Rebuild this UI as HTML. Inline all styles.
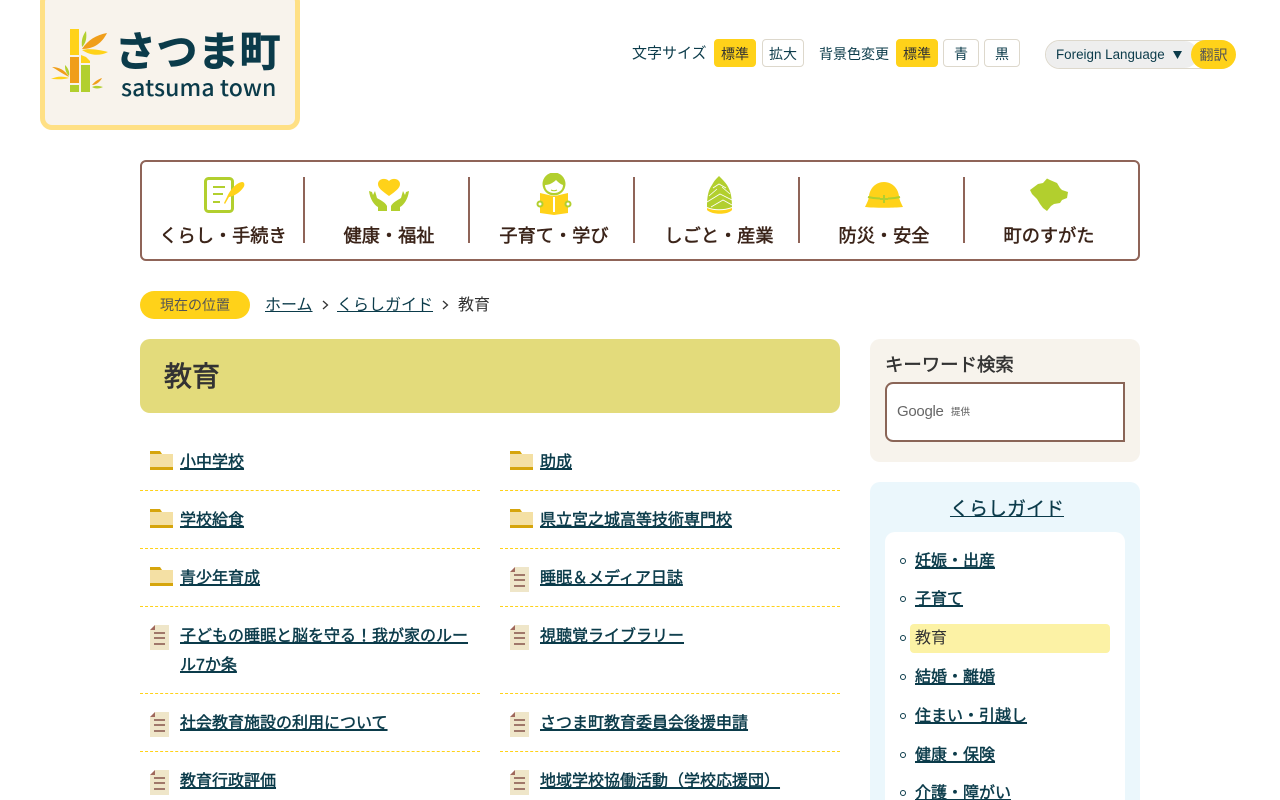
<!DOCTYPE html>
<html lang="ja"><head><meta charset="utf-8"><title>教育 | さつま町</title>
<style>
html,body{margin:0;padding:0;background:#fff;width:1280px;height:800px;overflow:hidden}
#w{position:relative;width:1280px;height:800px;overflow:hidden;font-family:"Liberation Sans","Noto Sans CJK JP",sans-serif;color:#333}
.a{position:absolute;white-space:nowrap}
a{color:#0b3b4a;text-decoration:underline}
.btn{position:absolute;top:39px;height:28px;line-height:28px;box-sizing:border-box;border:1px solid #ddd8cc;border-radius:4px;background:#fff;text-align:center;font-size:14px;color:#0b3b4a}
.on{background:#ffd219;border-color:#ffd219;color:#333}
.nav{position:absolute;top:225px;height:22px;line-height:22px;font-size:18.2px;color:#3a2318;text-align:center;white-space:nowrap;-webkit-text-stroke:.5px #3a2318}
.sep{position:absolute;top:177px;width:2px;height:66px;background:#8f6458}
.li{position:absolute;font-size:16px;line-height:29px;-webkit-text-stroke:.45px #0b3b4a}
.li a,.s a{text-decoration-thickness:1.5px}
.ln{position:absolute;width:340px;height:0;border-top:1px dashed #ffd219}
.s{position:absolute;left:915px;font-size:16px;line-height:22px;white-space:nowrap;-webkit-text-stroke:.45px #0b3b4a}
.dot{position:absolute;left:900px;width:4px;height:4px;border:1px solid #0b3b4a;border-radius:50%}
</style></head><body><div id="w">
<svg width="0" height="0" style="position:absolute"><defs>
<g id="folder"><path d="M0 0H10L12 3H23V19H0Z" fill="#d6a50c"/><rect x="0" y="3" width="23" height="13" fill="#f4e0a4"/></g>
<g id="doc"><path d="M5 0H19V25H0V5Z" fill="#efe6c9"/><path d="M5 0V5H0Z" fill="#a0695c"/><path d="M4 8H15M4 13H15M4 19H15" stroke="#a0786a" stroke-width="2"/></g>
</defs></svg>

<!-- logo -->
<div style="position:absolute;left:40px;top:-10px;width:260px;height:140px;box-sizing:border-box;border:5px solid #ffe085;border-radius:12px;background:#f8f3ec"></div>
<svg class="a" style="left:50px;top:26px" width="60" height="70" viewBox="0 0 60 70">
<rect x="20" y="3" width="9" height="26" fill="#ffd219"/><rect x="20" y="31" width="9" height="26" fill="#f09e1a"/><rect x="20" y="59" width="9" height="7" fill="#b2cf2e"/>
<path d="M31 29L36 31L40 35V37H31Z" fill="#ffd219"/><rect x="31" y="39" width="9" height="27" fill="#b2cf2e"/>
<path d="M32 21C31 14 33 9 36 5C37 12 36 17 32 21Z" fill="#b2cf2e"/><path d="M32 23C38 14 46 9 57 7C52 17 44 23 32 23Z" fill="#f09e1a"/><path d="M32 24C40 22 49 24 58 26C50 30 41 30 32 24Z" fill="#ffd219"/>
<path d="M19 51C11 47 6 43 2 41C9 41 15 44 19 51Z" fill="#f09e1a"/><path d="M19 52C12 54 6 53 1 53C7 50 13 50 19 52Z" fill="#ffd219"/><path d="M19 50C15 46 15 42 15 39C18 42 20 46 19 50Z" fill="#b2cf2e"/>
<path d="M42 59C45 55 49 53 52 52C50 56 46 59 42 59Z" fill="#f09e1a"/><path d="M42 61C46 59 50 60 53 61C49 63 45 63 42 61Z" fill="#b2cf2e"/>
</svg>
<div class="a" style="left:115px;top:27px;font-size:41px;line-height:50px;font-weight:700;color:#0b3b4a;letter-spacing:.5px;-webkit-text-stroke:.7px #0b3b4a">さつま町</div>
<div class="a" style="left:121px;top:71px;font-size:23px;line-height:30px;font-weight:500;color:#0b3b4a;letter-spacing:.1px;font-family:'Noto Sans CJK JP',sans-serif">satsuma town</div>

<!-- tools -->
<div class="a" style="left:632px;top:44px;font-size:15px;line-height:20px;color:#0b3b4a">文字サイズ</div>
<div class="btn on" style="left:714px;width:42px">標準</div>
<div class="btn" style="left:762px;width:42px">拡大</div>
<div class="a" style="left:819px;top:44px;font-size:14px;line-height:20px;color:#0b3b4a">背景色変更</div>
<div class="btn on" style="left:896px;width:42px">標準</div>
<div class="btn" style="left:943px;width:36px">青</div>
<div class="btn" style="left:984px;width:36px">黒</div>
<div style="position:absolute;left:1045px;top:40px;width:190px;height:29px;box-sizing:border-box;border:1px solid #ddd8cc;border-radius:15px;background:#fff"></div>
<div style="position:absolute;left:1046px;top:41px;width:152px;height:27px;border-radius:14px;background:#eee"></div>
<div class="a" style="left:1056px;top:45px;font-size:13.400px;line-height:19px;color:#0b3b4a">Foreign Language</div>
<svg class="a" style="left:1173px;top:51px" width="9" height="8"><path d="M0 0H9L4.500 8Z" fill="#0b3b4a"/></svg>
<div class="a" style="left:1191px;top:40px;width:45px;height:29px;border-radius:15px;background:#ffd219;text-align:center;font-size:14px;line-height:31px;color:#555">翻訳</div>

<!-- nav -->
<div style="position:absolute;left:140px;top:160px;width:1000px;height:101px;box-sizing:border-box;border:2px solid #8f6458;border-radius:6px"></div>
<div class="sep" style="left:303px"></div><div class="sep" style="left:468px"></div><div class="sep" style="left:633px"></div><div class="sep" style="left:798px"></div><div class="sep" style="left:963px"></div>

<svg class="a" style="left:204px;top:176px" width="42" height="38"><rect x="1.500" y="2.500" width="27" height="33" rx="3" fill="#fff" stroke="#b2cf2e" stroke-width="3"/><path d="M9 11H21M9 18H19M9 26H16" stroke="#b2cf2e" stroke-width="2"/><path d="M20 27L23 21C26 14 32 7 38 6C41 6 41 10 39 12C36 16 31 20 25 21L21 28Z" fill="#ffd219"/></svg>
<svg class="a" style="left:368px;top:178px" width="42" height="36"><path d="M21 18C14 13 10 10 10 6C10 1 17-1 21 3C25-1 32 1 32 6C32 10 28 13 21 18Z" fill="#ffd219"/><path d="M1 13L4 14L5 17L7 13L9 20C12 22 17 24 19 28V33H10V29C6 27 2 21 1 13Z" fill="#b2cf2e"/><path d="M41 13L38 14L37 17L35 13L33 20C30 22 25 24 23 28V33H32V29C36 27 40 21 41 13Z" fill="#b2cf2e"/></svg>
<svg class="a" style="left:535px;top:173px" width="38" height="44"><circle cx="19" cy="11" r="11.500" fill="#b2cf2e"/><path d="M10 12C14 12 18 10 21 7C23 9 25 11 28 12C28 17 24 20 19 20C14 20 10 17 10 12Z" fill="#fff"/><path d="M16 17C18 18 20 18 22 17" stroke="#b2cf2e" fill="none" stroke-width="1"/><path d="M5 20L18 23H20L33 20V40L19 42L5 40Z" fill="#ffd219"/><rect x="18" y="24" width="2" height="15" fill="#fff"/><circle cx="5" cy="31" r="2.500" fill="#fff" stroke="#b2cf2e" stroke-width="2"/><circle cx="33" cy="31" r="2.500" fill="#fff" stroke="#b2cf2e" stroke-width="2"/></svg>
<svg class="a" style="left:704px;top:175px" width="30" height="40"><path d="M15 1C18 4 21 7 23 10C26 15 28 20 28 32C20 35 10 35 3 32C3 20 5 14 8 10C10 6 12 4 15 1Z" fill="#b2cf2e"/><path d="M3 33C10 36 20 36 28 33L28 35C24 40 8 40 3 35Z" fill="#ffd219"/><path d="M3 27L16 19L28 25M7 32L19 25L28 30M9 13L15 9L22 13M5 21L13 14M26 19L18 12" stroke="#fff" fill="none" stroke-width=".8"/></svg>
<svg class="a" style="left:864px;top:181px" width="40" height="28"><path d="M1 26C3 22 5 18 5 15C6 7 12 1 20 1C28 1 34 7 35 15C35 18 37 22 39 26C30 27 10 27 1 26Z" fill="#ffd219"/><path d="M4 16C8 17 12 17.500 16 17.500M24 17.500C28 17.500 32 17 36 16M20 14V22M16 18H24" stroke="#b2cf2e" fill="none" stroke-width="2"/></svg>
<svg class="a" style="left:1029px;top:177px" width="40" height="36"><path d="M1 13L9 7L14 6L18 1.500L21 3L28 6L31 11L33 13L39 15L38 21L33 23L31 26L25 27L22 29L18 34L14 31L11 27L8 22L3 17Z" fill="#b2cf2e"/></svg>

<div class="nav" style="left:143px;width:160px">くらし・手続き</div>
<div class="nav" style="left:309px;width:160px">健康・福祉</div>
<div class="nav" style="left:474px;width:160px">子育て・学び</div>
<div class="nav" style="left:639px;width:160px">しごと・産業</div>
<div class="nav" style="left:804px;width:160px">防災・安全</div>
<div class="nav" style="left:969px;width:160px">町のすがた</div>

<!-- breadcrumb -->
<div class="a" style="left:140px;top:291px;width:110px;height:28px;border-radius:14px;background:#ffd219;text-align:center;font-size:14px;line-height:29px;color:#555">現在の位置</div>
<div class="a" style="left:265px;top:295px;font-size:16px;line-height:22px"><a href="#">ホーム</a></div>
<svg class="a" style="left:322px;top:300px" width="7" height="10"><path d="M1 1L5.500 5L1 9" fill="none" stroke="#333" stroke-width="1.300"/></svg>
<div class="a" style="left:337px;top:295px;font-size:16px;line-height:22px"><a href="#">くらしガイド</a></div>
<svg class="a" style="left:442px;top:300px" width="7" height="10"><path d="M1 1L5.500 5L1 9" fill="none" stroke="#333" stroke-width="1.300"/></svg>
<div class="a" style="left:458px;top:295px;font-size:16px;line-height:22px;color:#333">教育</div>

<!-- title -->
<div style="position:absolute;left:140px;top:339px;width:700px;height:74px;border-radius:10px;background:#e3db7b"></div>
<div class="a" style="left:164px;top:357px;font-size:28px;line-height:40px;color:#333;-webkit-text-stroke:.7px #333">教育</div>

<!-- list left -->
<svg class="a" style="left:150px;top:451px" width="23" height="20"><use href="#folder"/></svg>
<div class="li" style="left:180px;top:448px"><a href="#">小中学校</a></div>
<div class="ln" style="left:140px;top:490px"></div>
<svg class="a" style="left:150px;top:509px" width="23" height="20"><use href="#folder"/></svg>
<div class="li" style="left:180px;top:506px"><a href="#">学校給食</a></div>
<div class="ln" style="left:140px;top:548px"></div>
<svg class="a" style="left:150px;top:567px" width="23" height="20"><use href="#folder"/></svg>
<div class="li" style="left:180px;top:564px"><a href="#">青少年育成</a></div>
<div class="ln" style="left:140px;top:606px"></div>
<svg class="a" style="left:150px;top:625px" width="19" height="25"><use href="#doc"/></svg>
<div class="li" style="left:180px;top:622px;width:290px"><a href="#">子どもの睡眠と脳を守る！我が家のルール7か条</a></div>
<div class="ln" style="left:140px;top:693px"></div>
<svg class="a" style="left:150px;top:712px" width="19" height="25"><use href="#doc"/></svg>
<div class="li" style="left:180px;top:709px"><a href="#">社会教育施設の利用について</a></div>
<div class="ln" style="left:140px;top:751px"></div>
<svg class="a" style="left:150px;top:770px" width="19" height="25"><use href="#doc"/></svg>
<div class="li" style="left:180px;top:767px"><a href="#">教育行政評価</a></div>

<!-- list right -->
<svg class="a" style="left:510px;top:451px" width="23" height="20"><use href="#folder"/></svg>
<div class="li" style="left:540px;top:448px"><a href="#">助成</a></div>
<div class="ln" style="left:500px;top:490px"></div>
<svg class="a" style="left:510px;top:509px" width="23" height="20"><use href="#folder"/></svg>
<div class="li" style="left:540px;top:506px"><a href="#">県立宮之城高等技術専門校</a></div>
<div class="ln" style="left:500px;top:548px"></div>
<svg class="a" style="left:510px;top:567px" width="19" height="25"><use href="#doc"/></svg>
<div class="li" style="left:540px;top:564px"><a href="#">睡眠＆メディア日誌</a></div>
<div class="ln" style="left:500px;top:606px"></div>
<svg class="a" style="left:510px;top:625px" width="19" height="25"><use href="#doc"/></svg>
<div class="li" style="left:540px;top:622px"><a href="#">視聴覚ライブラリー</a></div>
<div class="ln" style="left:500px;top:693px"></div>
<svg class="a" style="left:510px;top:712px" width="19" height="25"><use href="#doc"/></svg>
<div class="li" style="left:540px;top:709px"><a href="#">さつま町教育委員会後援申請</a></div>
<div class="ln" style="left:500px;top:751px"></div>
<svg class="a" style="left:510px;top:770px" width="19" height="25"><use href="#doc"/></svg>
<div class="li" style="left:540px;top:767px"><a href="#">地域学校協働活動（学校応援団）</a></div>

<!-- sidebar search -->
<div style="position:absolute;left:870px;top:339px;width:270px;height:123px;border-radius:10px;background:#f7f3ec"></div>
<div class="a" style="left:885px;top:352px;font-size:18.400px;line-height:26px;color:#333;-webkit-text-stroke:.5px #333">キーワード検索</div>
<div style="position:absolute;left:885px;top:382px;width:240px;height:60px;box-sizing:border-box;border:2px solid #8a6557;border-radius:8px 0 0 8px;background:#fff"></div>
<div class="a" style="left:897px;top:402px;font-size:15px;line-height:20px;color:#666;letter-spacing:-.3px">Google</div>
<div class="a" style="left:951px;top:406px;font-size:9.500px;line-height:14px;color:#555">提供</div>

<!-- sidebar guide -->
<div style="position:absolute;left:870px;top:482px;width:270px;height:318px;border-radius:10px 10px 0 0;background:#ebf7fc"></div>
<div class="a" style="left:872px;width:270px;top:497px;text-align:center;font-size:19px;line-height:26px;color:#0b3b4a;-webkit-text-stroke:.3px #0b3b4a"><a href="#">くらしガイド</a></div>
<div style="position:absolute;left:885px;top:532px;width:240px;height:268px;border-radius:10px 10px 0 0;background:#fff"></div>
<div class="dot" style="top:558px"></div><div class="s" style="top:551px"><a href="#">妊娠・出産</a></div>
<div class="dot" style="top:596px"></div><div class="s" style="top:589px"><a href="#">子育て</a></div>
<div class="dot" style="top:635px"></div>
<div style="position:absolute;left:910px;top:624px;width:200px;height:29px;border-radius:4px;background:#fcf2a5"></div>
<div class="s" style="top:628px;color:#333;-webkit-text-stroke:0">教育</div>
<div class="dot" style="top:674px"></div><div class="s" style="top:667px"><a href="#">結婚・離婚</a></div>
<div class="dot" style="top:713px"></div><div class="s" style="top:706px"><a href="#">住まい・引越し</a></div>
<div class="dot" style="top:752px"></div><div class="s" style="top:745px"><a href="#">健康・保険</a></div>
<div class="dot" style="top:790px"></div><div class="s" style="top:783px"><a href="#">介護・障がい</a></div>
</div></body></html>
